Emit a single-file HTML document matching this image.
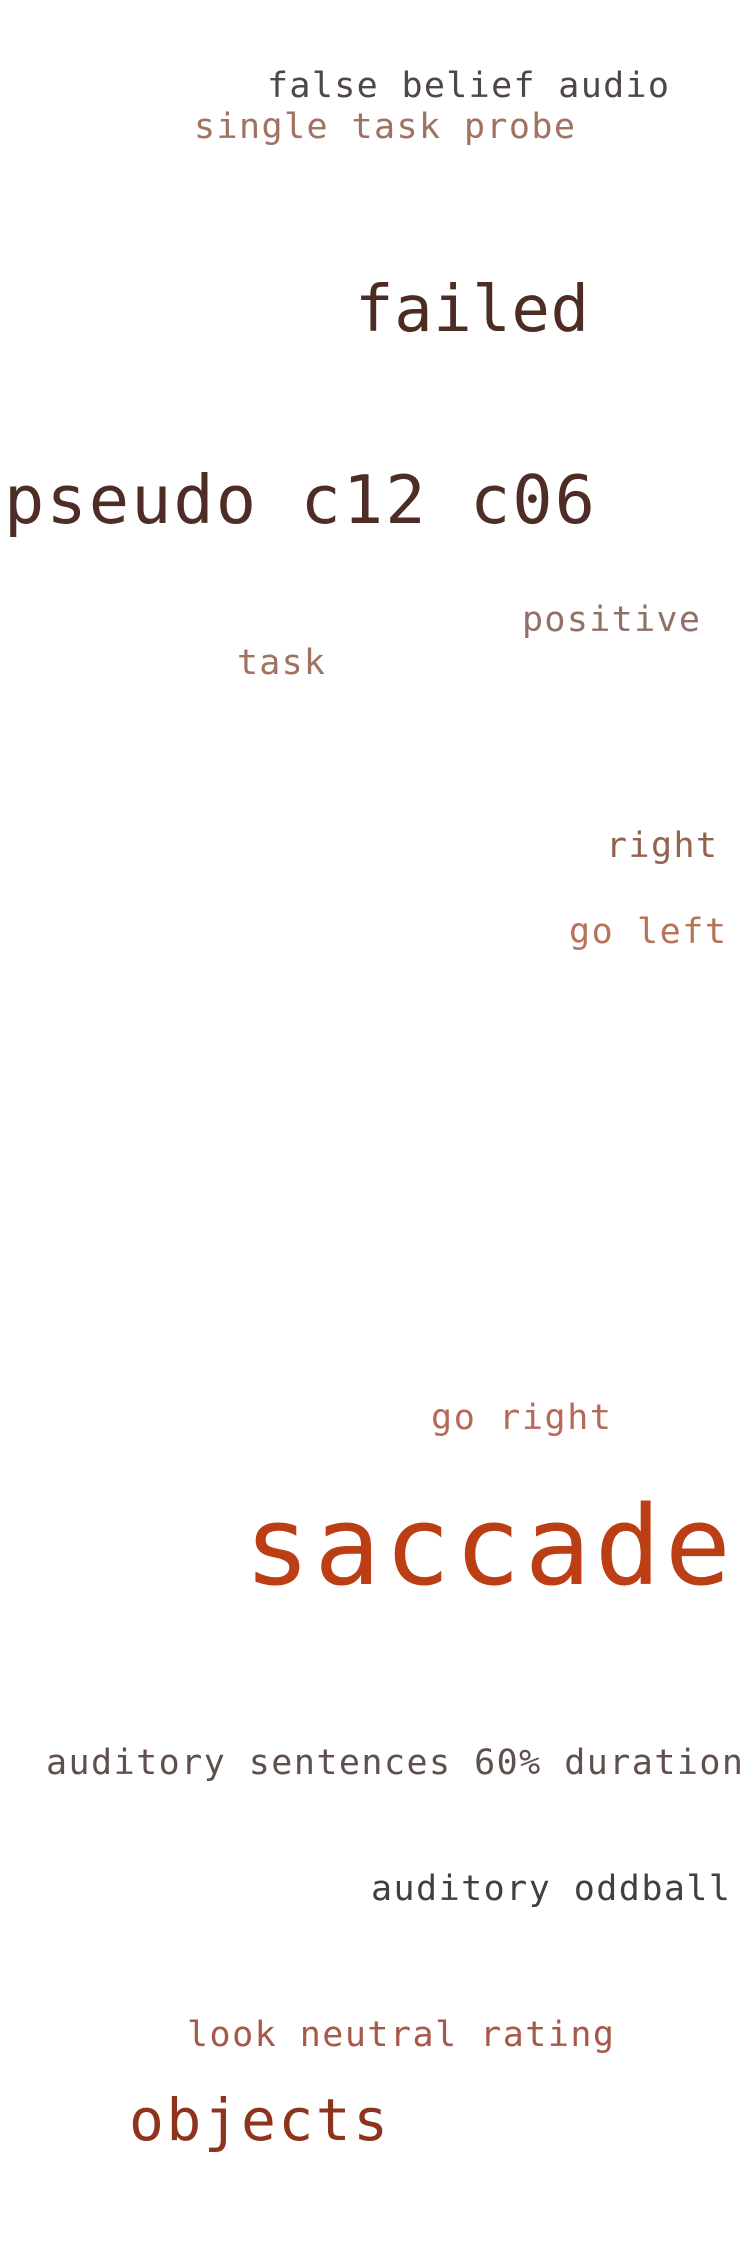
<!DOCTYPE html>
<html>
<head>
<meta charset="utf-8">
<style>
html,body{margin:0;padding:0;background:#fff;}
svg{display:block;}
text{font-family:"DejaVu Sans Mono","Liberation Mono",monospace;}
</style>
</head>
<body>
<svg width="750" height="2250" viewBox="0 0 750 2250" xmlns="http://www.w3.org/2000/svg">
<rect width="750" height="2250" fill="#fff"/>
<text x="267" y="97" font-size="35" fill="#4f4747" textLength="402" lengthAdjust="spacing">false belief audio</text>
<text x="194" y="138" font-size="35" fill="#a07262" textLength="381" lengthAdjust="spacing">single task probe</text>
<text x="355" y="331" font-size="64" fill="#4d2d23" textLength="234" lengthAdjust="spacing">failed</text>
<text x="4" y="523" font-size="67" fill="#4d2d25" textLength="591" lengthAdjust="spacing">pseudo c12 c06</text>
<text x="522" y="631" font-size="35" fill="#917068" textLength="178" lengthAdjust="spacing">positive</text>
<text x="237" y="674" font-size="35" fill="#a07262" textLength="88" lengthAdjust="spacing">task</text>
<text x="606" y="857" font-size="35" fill="#926252" textLength="111" lengthAdjust="spacing">right</text>
<text x="569" y="943" font-size="35" fill="#b87258" textLength="157" lengthAdjust="spacing">go left</text>
<text x="431" y="1429" font-size="35" fill="#b86858" textLength="180" lengthAdjust="spacing">go right</text>
<text x="244" y="1584" font-size="110" fill="#bc3e14" textLength="487" lengthAdjust="spacing">saccade</text>
<text x="46" y="1774" font-size="35" fill="#5f504e" textLength="697" lengthAdjust="spacing">auditory sentences 60% duration</text>
<text x="371" y="1900" font-size="35" fill="#404040" textLength="359" lengthAdjust="spacing">auditory oddball</text>
<text x="187" y="2046" font-size="35" fill="#a85848" textLength="427" lengthAdjust="spacing">look neutral rating</text>
<text x="129" y="2140" font-size="58" fill="#8e341c" textLength="259" lengthAdjust="spacing">objects</text>
</svg>
</body>
</html>
